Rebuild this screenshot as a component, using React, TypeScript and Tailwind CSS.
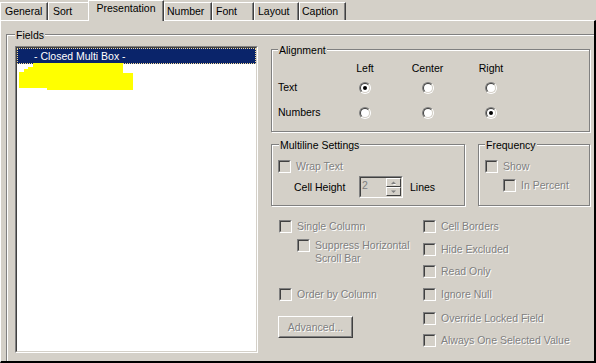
import React from 'react';

const DIS = "text-[#808080] [text-shadow:1px_1px_0_#ffffff]";

function Box() {
  return (
    <span className="block w-[13px] h-[13px] shrink-0 border border-t-[#808080] border-l-[#808080] border-b-white border-r-white">
      <span className="block w-[11px] h-[11px] border border-t-[#404040] border-l-[#404040] border-b-[#d4d0c8] border-r-[#d4d0c8] bg-[#d4d0c8]" />
    </span>
  );
}

function CheckRow({ label, className = '' }: { label: string; className?: string }) {
  return (
    <div className={`flex items-center h-[13px] ${className}`}>
      <Box />
      <span className={`ml-[5px] leading-[13px] whitespace-nowrap ${DIS}`}>{label}</span>
    </div>
  );
}

function Radio({ checked = false }: { checked?: boolean }) {
  return (
    <span className="block w-[12px] h-[12px] rounded-full border border-t-[#808080] border-l-[#808080] border-b-white border-r-white">
      <span className="flex items-center justify-center w-full h-full rounded-full border border-t-[#404040] border-l-[#404040] border-b-[#d4d0c8] border-r-[#d4d0c8] bg-white">
        {checked && <span className="block w-[4px] h-[4px] rounded-full bg-black" />}
      </span>
    </span>
  );
}

function Group({ label, className = '', labelClass = 'left-[6px]', children }: { label: string; className?: string; labelClass?: string; children?: React.ReactNode }) {
  return (
    <div className={`relative shrink-0 border border-[#808080] shadow-[inset_1px_1px_0_#ffffff,1px_1px_0_#ffffff] ${className}`}>
      <span className={`absolute top-[-6px] px-[1px] bg-[#d4d0c8] leading-[13px] whitespace-nowrap ${labelClass}`}>{label}</span>
      {children}
    </div>
  );
}

function SpinBtn({ up }: { up?: boolean }) {
  return (
    <div className="h-[9px] flex items-center justify-center border border-t-white border-l-white border-b-[#404040] border-r-[#404040] bg-[#d4d0c8]">
      <svg width="5" height="4" viewBox="0 0 5 4">
        {up ? (
          <>
            <polygon points="1,3 4,3 2.5,1" fill="#ffffff" transform="translate(1,1)" />
            <polygon points="0,3 5,3 2.5,0.5" fill="#808080" />
          </>
        ) : (
          <>
            <polygon points="0,0.5 5,0.5 2.5,3" fill="#808080" />
          </>
        )}
      </svg>
    </div>
  );
}

function ListBox() {
  return (
    <div className="relative w-[243px] h-[307px] shrink-0 border border-t-[#808080] border-l-[#808080] border-b-white border-r-white">
      <div className="relative w-full h-full border border-t-[#404040] border-l-[#404040] border-b-[#d4d0c8] border-r-[#d4d0c8] bg-white">
        <div className="h-[16px] bg-[#0a246a] text-white border border-dotted border-[#f5db95] pl-[16px] leading-[14px] whitespace-nowrap">
          - Closed Multi Box -
        </div>
        <svg className="absolute left-0 top-0" width="130" height="50" viewBox="0 0 130 50">
          <polygon
            fill="#ffff00"
            points="16,15 106,15 106,25 116,25 116,42 30,42 30,40 2,40 2,24 7,24 7,21 11,21 11,19 16,19"
          />
        </svg>
      </div>
    </div>
  );
}

export default function App() {
  return (
    <div className="w-[596px] h-[363px] bg-[#d4d0c8] overflow-hidden flex flex-col text-[10.5px] leading-[13px] text-black font-['Liberation_Sans',Arial,sans-serif]">
      {/* Tabs */}
      <div className="relative z-10 flex items-end h-[20px] shrink-0">
        <div className="w-[48px] h-[18px] shrink-0 border-t border-l border-r border-t-white border-l-white border-r-[#404040] shadow-[inset_-1px_0_0_#808080] pl-[4px] pt-[2px] whitespace-nowrap">General</div>
        <div className="w-[42px] h-[18px] shrink-0 border-t border-l border-r border-t-white border-l-white border-r-[#404040] shadow-[inset_-1px_0_0_#808080] pl-[4px] pt-[2px] whitespace-nowrap">Sort</div>
        <div className="relative z-10 w-[76px] h-[21px] mb-[-1px] ml-[-2px] shrink-0 bg-[#d4d0c8] border-t border-l border-r border-t-white border-l-white border-r-[#404040] shadow-[inset_-1px_0_0_#808080] text-center pt-[1px] whitespace-nowrap">Presentation</div>
        <div className="w-[48px] h-[18px] shrink-0 border-t border-l border-r border-t-white border-l-white border-r-[#404040] shadow-[inset_-1px_0_0_#808080] pl-[2px] pt-[2px] whitespace-nowrap">Number</div>
        <div className="w-[42px] h-[18px] shrink-0 border-t border-l border-r border-t-white border-l-white border-r-[#404040] shadow-[inset_-1px_0_0_#808080] pl-[3px] pt-[2px] whitespace-nowrap">Font</div>
        <div className="w-[45px] h-[18px] shrink-0 border-t border-l border-r border-t-white border-l-white border-r-[#404040] shadow-[inset_-1px_0_0_#808080] pl-[3px] pt-[2px] whitespace-nowrap">Layout</div>
        <div className="w-[47px] h-[18px] shrink-0 border-t border-l border-r border-t-white border-l-white border-r-[#404040] shadow-[inset_-1px_0_0_#808080] pl-[2px] pt-[2px] whitespace-nowrap">Caption</div>
      </div>

      {/* Panel */}
      <div className="flex-1 min-h-0 flex flex-col border-t border-l border-r-2 border-b-2 border-t-white border-l-white border-r-black border-b-black pl-[5px] pt-[13px] overflow-hidden">
        <div className="relative flex-1 border-t border-l border-t-[#808080] border-l-[#808080] shadow-[inset_1px_1px_0_#ffffff]">
          <span className="absolute left-[8px] top-[-6px] px-[1px] bg-[#d4d0c8] leading-[13px]">Fields</span>
          <div className="flex items-start pl-[8px] pt-[11px]">
            <ListBox />

            <div className="ml-[13px] mt-[3px] w-[320px] shrink-0">
              {/* Alignment */}
              <Group label="Alignment" className="w-[319px] h-[83px]">
                <div className="grid grid-cols-[56px_62px_63px_64px] grid-rows-[13px_25px_25px] pl-[6px] pt-[12px]">
                  <div />
                  <div className="text-center">Left</div>
                  <div className="text-center">Center</div>
                  <div className="text-center">Right</div>

                  <div className="flex items-center">Text</div>
                  <div className="flex items-center justify-center"><Radio checked /></div>
                  <div className="flex items-center justify-center"><Radio /></div>
                  <div className="flex items-center justify-center"><Radio /></div>

                  <div className="flex items-center">Numbers</div>
                  <div className="flex items-center justify-center"><Radio /></div>
                  <div className="flex items-center justify-center"><Radio /></div>
                  <div className="flex items-center justify-center"><Radio checked /></div>
                </div>
              </Group>

              <div className="flex mt-[12px]">
                <Group label="Multiline Settings" className="w-[194px] h-[62px]" labelClass="left-[7px]">
                  <div className="pl-[6px] pt-[15px]">
                    <CheckRow label="Wrap Text" />
                    <div className="flex items-center h-[22px] mt-[3px]">
                      <span className="pl-[16px] w-[81px] shrink-0 whitespace-nowrap">Cell Height</span>
                      <div className="flex w-[44px] h-[22px] shrink-0 border border-t-[#808080] border-l-[#808080] border-b-white border-r-white">
                        <div className="flex flex-1 border border-t-[#404040] border-l-[#404040] border-b-[#d4d0c8] border-r-[#d4d0c8] bg-[#d4d0c8]">
                          <span className="flex-1 pl-[1px] pt-[1px] leading-[13px] text-[#808080]">2</span>
                          <div className="flex flex-col w-[15px]">
                            <SpinBtn up />
                            <SpinBtn />
                          </div>
                        </div>
                      </div>
                      <span className="ml-[7px]">Lines</span>
                    </div>
                  </div>
                </Group>
                <Group label="Frequency" className="ml-[13px] w-[112px] h-[62px]">
                  <div className="pl-[6px] pt-[15px]">
                    <CheckRow label="Show" />
                    <CheckRow label="In Percent" className="mt-[6px] ml-[18px]" />
                  </div>
                </Group>
              </div>

              <div className="flex mt-[14px]">
                <div className="w-[152px] shrink-0 pl-[8px]">
                  <CheckRow label="Single Column" />
                  <div className="flex items-start mt-[6px] ml-[18px]">
                    <Box />
                    <span className={`ml-[5px] leading-[13px] ${DIS}`}>
                      Suppress Horizontal
                      <br />
                      Scroll Bar
                    </span>
                  </div>
                  <CheckRow label="Order by Column" className="mt-[23px]" />
                  <div className="w-[75px] h-[22px] mt-[15px] ml-[-1px] border border-t-white border-l-white border-b-[#404040] border-r-[#404040]">
                    <div className={`h-full flex items-center justify-center border border-t-[#d4d0c8] border-l-[#d4d0c8] border-b-[#808080] border-r-[#808080] ${DIS}`}>
                      Advanced...
                    </div>
                  </div>
                </div>
                <div className="flex-1">
                  <CheckRow label="Cell Borders" />
                  <CheckRow label="Hide Excluded" className="mt-[10px]" />
                  <CheckRow label="Read Only" className="mt-[9px]" />
                  <CheckRow label="Ignore Null" className="mt-[10px]" />
                  <CheckRow label="Override Locked Field" className="mt-[11px]" />
                  <CheckRow label="Always One Selected Value" className="mt-[9px]" />
                </div>
              </div>
            </div>
          </div>
        </div>
      </div>
    </div>
  );
}
